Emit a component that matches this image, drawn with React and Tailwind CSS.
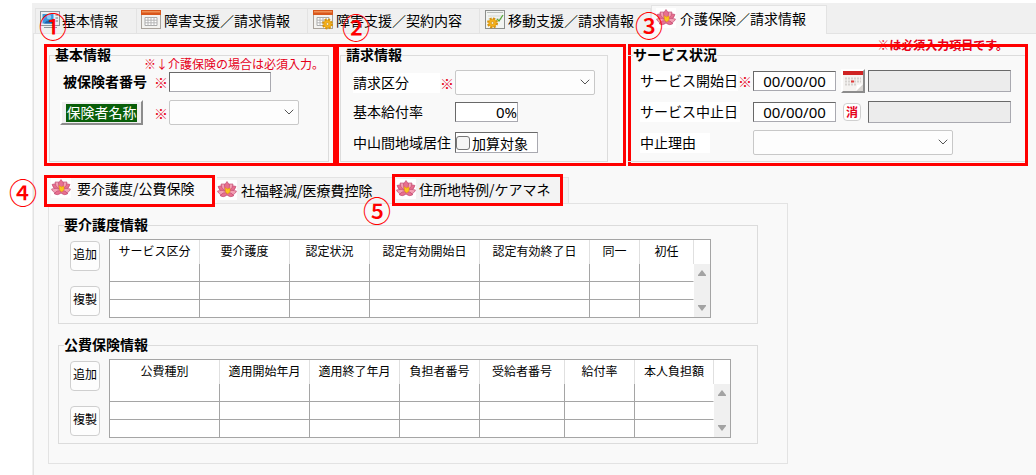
import { ChevronDown } from 'lucide-react';

const careColumns = [
  { name: 'サービス区分', w: 'w-[90px]' },
  { name: '要介護度', w: 'w-[90px]' },
  { name: '認定状況', w: 'w-[80px]' },
  { name: '認定有効開始日', w: 'w-[110px]' },
  { name: '認定有効終了日', w: 'w-[110px]' },
  { name: '同一', w: 'w-[50px]' },
  { name: '初任', w: 'w-[54px]' },
];

const publicColumns = [
  { name: '公費種別', w: 'w-[110px]' },
  { name: '適用開始年月', w: 'w-[90px]' },
  { name: '適用終了年月', w: 'w-[90px]' },
  { name: '負担者番号', w: 'w-[80px]' },
  { name: '受給者番号', w: 'w-[85px]' },
  { name: '給付率', w: 'w-[70px]' },
  { name: '本人負担額', w: 'w-[79px]' },
];

function Flower() {
  return (
    <svg viewBox="0 0 20 20" className="size-5 shrink-0 bg-white">
      <g fill="#e8708f" stroke="#b8406a" strokeWidth="0.6" strokeLinejoin="round">
        <path d="M1 6.5 L5 5.5 L10 10 L7 12 Q2 11 1 6.5Z" />
        <path d="M19 6.5 L15 5.5 L10 10 L13 12 Q18 11 19 6.5Z" />
        <path d="M4 4 L8 4 L10 9 L8 11 Q4 8 4 4Z" fill="#f4a0b4" />
        <path d="M16 4 L12 4 L10 9 L12 11 Q16 8 16 4Z" fill="#f4a0b4" />
        <path d="M10 1.5 L12.5 5 L12 10 H8 L7.5 5Z" />
        <path d="M0.5 11 Q5 9 10 12 L8 15 Q2 15.5 0.5 11Z" fill="#f4a0b4" />
        <path d="M19.5 11 Q15 9 10 12 L12 15 Q18 15.5 19.5 11Z" fill="#f4a0b4" />
        <path d="M3 15.5 Q6 12 10 12.5 L9.5 15.5 Q6 18 3 15.5Z" />
        <path d="M17 15.5 Q14 12 10 12.5 L10.5 15.5 Q14 18 17 15.5Z" />
      </g>
      <path d="M8 7.5 L10.5 9 L13 8 L13 12 L10.5 14 L8.5 12Z" fill="#f8c51c" stroke="#e08a12" strokeWidth="0.5" />
    </svg>
  );
}

function Gear({ cx, cy }) {
  return (
    <g transform={`translate(${cx} ${cy})`}>
      <circle r="4" fill="none" stroke="#d6930c" strokeWidth="3" strokeDasharray="1.9 1.24" />
      <circle r="3.8" fill="#f6b21a" stroke="#d6930c" strokeWidth="0.6" />
      <circle r="1.3" fill="#fff3cf" stroke="#b57808" strokeWidth="0.5" />
    </g>
  );
}

function CalendarIcon({ gear }) {
  return (
    <svg viewBox="0 0 20 20" className="size-5 shrink-0">
      <rect x="0.5" y="0.5" width="19" height="18" fill="#f4f3f0" stroke="#a9a39c" />
      <path d="M0 0H20V5H0Z" fill="#d9571c" />
      <path d="M1 1H19V2.5H1Z" fill="#f09257" />
      <path d="M4 7.5H16V15.5H4Z" fill="#fff" stroke="#aaa" />
      <path d="M4 10.2H16M4 12.8H16M7 7.5V15.5M10 7.5V15.5M13 7.5V15.5" stroke="#b5b5b5" />
      {gear && <Gear cx={14.5} cy={14} />}
    </svg>
  );
}

function ChartIcon() {
  return (
    <svg viewBox="0 0 20 20" className="size-5 shrink-0">
      <rect x="0.5" y="0.5" width="19" height="18" fill="#f2f4f1" stroke="#8c8f8c" />
      <path d="M2 2.5H18" stroke="#b9bdb9" />
      <path d="M3 6H17M3 9H17" stroke="#d5d9d5" />
      <path d="M12 9L14 11L18 5" fill="none" stroke="#58a83a" strokeWidth="1.3" />
      <Gear cx={7.5} cy={13} />
    </svg>
  );
}

function PersonIcon() {
  return (
    <svg viewBox="0 0 20 20" className="size-5 shrink-0">
      <rect x="0.5" y="1.5" width="19" height="14" fill="#e9eef2" stroke="#8d959c" />
      <rect x="2.5" y="4" width="11" height="9.5" fill="#3b97dd" />
      <circle cx="9" cy="7" r="2.3" fill="#8cc8f2" />
      <path d="M4 13.5Q9 7 14 13.5Z" fill="#1f5fae" />
      <path d="M15.5 5H18M15.5 8H18M15.5 11H18" stroke="#6f777e" />
      <path d="M4 17.5H17" stroke="#8d959c" />
    </svg>
  );
}

function Badge({ children, className }) {
  return (
    <span className={`absolute z-10 flex size-[26px] items-center justify-center text-[28px] leading-none font-medium text-[#ff0000] ${className}`}>
      {children}
    </span>
  );
}

function Required() {
  return <span className="w-[15px] shrink-0 text-sm leading-5 text-[#e6001a]">※</span>;
}

function Select({ id, label, className }) {
  return (
    <div className={`relative h-[25px] ${className}`}>
      <select id={id} aria-label={label} className="block h-full w-full appearance-none rounded-xs border border-[#c8c8c8] bg-[#fdfdfd]">
        <option></option>
      </select>
      <ChevronDown className="pointer-events-none absolute top-1 right-0.5 size-4 text-[#555]" strokeWidth={1.5} />
    </div>
  );
}

const inset = 'border border-t-[#696969] border-l-[#696969] border-r-[#a9a9b0] border-b-[#a9a9b0]';
const digits = "font-['Noto_Sans',sans-serif] text-[15px]";

function Group({ title, className, children }) {
  return (
    <fieldset className={`min-w-0 border border-[#dcdcdc] ${className}`}>
      <legend className="ml-[5px] pb-px text-sm leading-[15px] font-bold">{title}</legend>
      {children}
    </fieldset>
  );
}

function Tab({ icon, className, children }) {
  return (
    <button role="tab" className={`flex items-center border border-[#e3e3e3] text-sm leading-5 whitespace-nowrap ${className}`}>
      {icon}
      {children}
    </button>
  );
}

function DataTable({ columns, label }) {
  return (
    <div className="flex w-fit border border-[#a5a5a5] bg-white">
      <table aria-label={label} className="table-fixed border-separate border-spacing-0 text-xs">
        <thead>
          <tr>
            {columns.map((c) => (
              <th key={c.name} className={`h-6 border-r border-[#e0e0e0] p-0 pb-0.5 text-center font-normal whitespace-nowrap ${c.w}`}>{c.name}</th>
            ))}
          </tr>
        </thead>
        <tbody>
          {[0, 1, 2].map((r) => (
            <tr key={r} className="group">
              {columns.map((c) => (
                <td key={c.name} className="h-[18px] border-r border-b border-[#a5a5a5] p-0 group-last:h-[17px] group-last:border-b-0 last:border-r-white"></td>
              ))}
            </tr>
          ))}
        </tbody>
      </table>
      <div className="flex w-4 flex-col pt-6">
        <div className="flex flex-1 flex-col items-center justify-between bg-[#f0f0f0] py-1.5">
          <svg viewBox="0 0 8 6" className="h-1.5 w-2"><path d="M4 0L8 5V6H0V5Z" fill="#a3a3a3" /></svg>
          <svg viewBox="0 0 8 6" className="h-1.5 w-2"><path d="M4 6L8 1V0H0V1Z" fill="#a3a3a3" /></svg>
        </div>
      </div>
    </div>
  );
}

function ListGroup({ title, columns }) {
  return (
    <Group title={title} className="h-[107px]">
      <div className="flex gap-[9px] pt-1.5 pl-[11px]">
        <div className="flex flex-col gap-[15px] pt-0.5">
          {['追加', '複製'].map((t) => (
            <button key={t} className="size-[30px] rounded-sm border border-[#cfcfcf] bg-[#fdfdfd] pb-1 text-xs">{t}</button>
          ))}
        </div>
        <DataTable columns={columns} label={title} />
      </div>
    </Group>
  );
}

export default function App() {
  return (
    <div className="flex min-h-screen flex-col bg-white pt-[3px] pl-8 font-['Noto_Sans_CJK_JP',sans-serif] text-black">
      <main className="flex flex-1 flex-col bg-[#f0f0f0]">
        <div role="tablist" className="flex h-[30px] items-end pl-[3px]">
          <Tab icon={<PersonIcon />} className="h-[25px] w-[102px] gap-0.5 border-b-0 pb-0.5 pl-1">基本情報</Tab>
          <Tab icon={<CalendarIcon />} className="h-[25px] w-[171px] gap-[3px] border-b-0 border-l-0 pb-0.5 pl-1">障害支援／請求情報</Tab>
          <Tab icon={<CalendarIcon gear />} className="h-[25px] w-[172px] gap-[3px] border-b-0 border-l-0 pb-0.5 pl-[5px]">障害支援／契約内容</Tab>
          <Tab icon={<ChartIcon />} className="h-[25px] w-[171px] gap-[3px] border-b-0 border-l-0 pb-0.5 pl-[5px]">移動支援／請求情報</Tab>
          <Tab icon={<Flower />} className="z-1 -mb-px h-[29px] w-[176px] gap-1 border-b-0 bg-[#f9f9f9] pb-1 pl-1">介護保険／請求情報</Tab>
        </div>

        <div className="ml-px flex-1 border-t border-l border-[#e3e3e3] bg-[#f9f9f9] pr-2 pl-2.5">
          <p className="h-2.5 pr-5 text-right text-xs leading-[22px] font-bold text-[#e6001a]">※は必須入力項目です。</p>

          <div className="grid grid-cols-[292fr_292fr_400fr]">
            <section className="relative border-3 border-[#ff0000] pr-1 pb-px pl-0.5">
              <Badge className="-top-[34px] -left-[7px]">①</Badge>
              <Group title="基本情報" className="h-[115px]">
                <p className="-mt-[7px] pr-1 text-right text-xs leading-4 text-[#e6001a]">※↓介護保険の場合は必須入力。</p>
                <div className="flex items-center pl-[13px]">
                  <label htmlFor="insured" className="w-[91px] pb-0.5 text-sm leading-[18px] font-bold">被保険者番号</label>
                  <Required />
                  <input id="insured" className={`h-5 w-[102px] bg-white ${inset}`} />
                </div>
                <div className="flex items-center pt-2 pl-2.5">
                  <button className="mr-[11px] h-[25px] w-[83px] border-2 border-t-white border-r-[#8c8c8c] border-b-[#8c8c8c] border-l-white bg-[#f0f0f0] px-1 py-px">
                    <span className="block bg-[#0a5f0a] pb-0.5 text-center text-sm leading-4 text-white">保険者名称</span>
                  </button>
                  <Required />
                  <Select label="保険者名称" className="w-[130px]" />
                </div>
              </Group>
            </section>

            <section className="relative mr-0.5 border-3 border-[#ff0000] pr-[15px] pb-px pl-px">
              <Badge className="-top-[33px] left-1">②</Badge>
              <Group title="請求情報" className="h-[115px]">
                <div className="flex items-center pt-[7px] pl-3">
                  <label htmlFor="claim" className="w-[87px] bg-white pb-0.5 text-sm leading-[18px]">請求区分</label>
                  <Required />
                  <Select id="claim" className="w-[140px]" />
                </div>
                <div className="flex items-center pt-[7px] pl-3">
                  <label htmlFor="rate" className="w-[102px] pb-0.5 text-sm leading-[18px]">基本給付率</label>
                  <input id="rate" defaultValue="0%" className={`h-5 w-[63px] bg-white text-right ${digits} ${inset}`} />
                </div>
                <div className="flex items-center pt-2.5 pl-3">
                  <span className="w-[102px] pb-0.5 text-sm leading-[18px]">中山間地域居住</span>
                  <label className={`flex h-[21px] w-[83px] items-center gap-0.5 bg-white text-sm leading-5 ${inset}`}>
                    <input type="checkbox" className="size-3.5 appearance-none rounded-[3px] border border-[#777] bg-[#f6f6f6]" />
                    加算対象
                  </label>
                </div>
              </Group>
            </section>

            <section className="relative border-3 border-[#ff0000] pb-px">
              <Badge className="-top-[35px] left-[5px]">③</Badge>
              <Group title="サービス状況" className="-ml-[3px] h-[115px] border-x-0">
                <div className="flex items-center pt-1.5 pl-3">
                  <label htmlFor="start" className="w-[98px] bg-white pb-0.5 text-sm leading-[18px] whitespace-nowrap">サービス開始日</label>
                  <Required />
                  <input id="start" defaultValue="00/00/00" className={`h-5 w-[83px] bg-white text-center ${digits} ${inset}`} />
                  <button aria-label="カレンダー" className="ml-[5px] h-6 w-6 border-2 border-t-white border-r-[#8c8c8c] border-b-[#8c8c8c] border-l-white bg-[#f0f0f0]">
                    <svg viewBox="0 0 20 20" className="size-5">
                      <rect width="20" height="20" fill="#f5f3f1" />
                      <rect width="20" height="4" fill="#cf2323" />
                      <path d="M2 7.5H18M2 10.5H18M2 13.5H14" stroke="#d5d2cf" strokeWidth="2" strokeDasharray="2 1" />
                      <rect x="8" y="9.5" width="3" height="2" fill="#e23a3a" />
                      <path d="M13 20L20 13V20Z" fill="#d8d5d2" />
                      <path d="M13 20L14 14L20 13Z" fill="#fff" />
                    </svg>
                  </button>
                  <input aria-label="開始日の元号" readOnly className={`ml-[3px] h-[22px] w-[143px] bg-[#ececec] ${inset}`} />
                </div>
                <div className="flex items-center pt-2 pl-3">
                  <label htmlFor="stop" className="mr-[13px] w-[100px] bg-white pb-0.5 text-sm leading-[18px] whitespace-nowrap">サービス中止日</label>
                  <input id="stop" defaultValue="00/00/00" className={`h-5 w-[83px] bg-white text-center ${digits} ${inset}`} />
                  <button className="mx-[7px] size-[18px] rounded-sm border border-[#d0d0d0] bg-white text-xs leading-4 font-bold text-[#e6001a]">消</button>
                  <input aria-label="中止日の元号" readOnly className={`h-[22px] w-[143px] bg-[#ececec] ${inset}`} />
                </div>
                <div className="flex items-center pt-[7px] pl-3">
                  <label htmlFor="reason" className="mr-[43px] w-[70px] bg-white pb-0.5 text-sm leading-[18px]">中止理由</label>
                  <Select id="reason" className="w-[200px]" />
                </div>
              </Group>
            </section>
          </div>

          <div role="tablist" className="flex h-[37px] items-end pt-2">
            <div className="relative z-1 -mb-1 h-8 w-[171px] shrink-0 border-3 border-[#ff0000]">
              <Badge className="top-px -left-[37px]">④</Badge>
              <Tab icon={<Flower />} className="h-[26px] w-full gap-1.5 border-0 bg-[#f9f9f9] pb-1.5 pl-1">要介護度/公費保険</Tab>
            </div>
            <Tab icon={<Flower />} className="ml-0.5 h-[26px] w-[175px] gap-1 border-x-0 border-b-0 bg-[#f3f3f3] pb-0.5">社福軽減/医療費控除</Tab>
            <div className="relative z-1 -mb-[3px] h-8 w-[171px] shrink-0 border-3 border-[#ff0000]">
              <Badge className="top-5 -left-[31px]">⑤</Badge>
              <Tab icon={<Flower />} className="h-[26px] w-full gap-[3px] border-0 bg-[#f3f3f3] pb-0.5 pl-px">住所地特例/ケアマネ</Tab>
            </div>
            <div className="h-[26px] w-1.5 border-t border-r border-[#e3e3e3] bg-[#f3f3f3]"></div>
          </div>

          <div className="ml-1 flex h-[261px] w-[740px] flex-col gap-[13px] border border-[#e3e3e3] pt-[13px] pr-[29px] pl-[9px]">
            <ListGroup title="要介護度情報" columns={careColumns} />
            <ListGroup title="公費保険情報" columns={publicColumns} />
          </div>
        </div>
      </main>
    </div>
  );
}
